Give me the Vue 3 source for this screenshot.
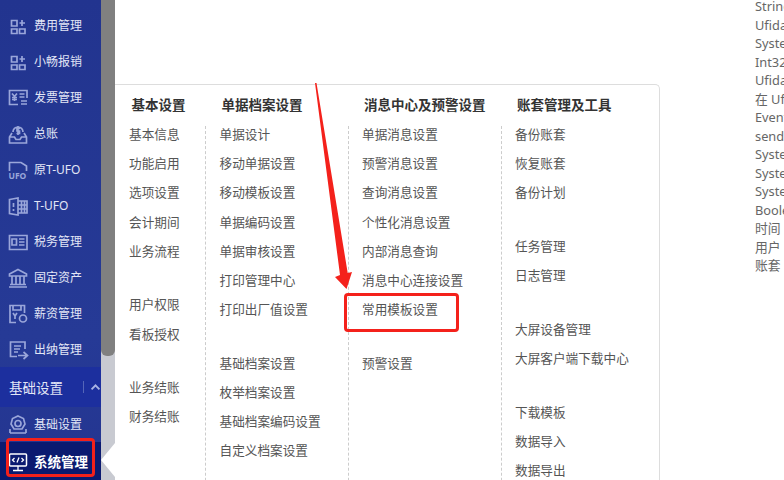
<template>
  <div class="page">
    <!-- 左侧菜单 -->
    <aside class="side">
      <div v-for="item in menuTop" :key="item.name" class="side-item">
        <svg class="icon" width="22" height="22" viewBox="0 0 22 22">
          <path :d="item.d" fill="none" stroke="currentColor" stroke-width="1.7" />
          <text v-if="item.tag" x="1.5" y="21" class="icon-tag">{{ item.tag }}</text>
        </svg>
        <span>{{ item.name }}</span>
      </div>
      <div class="side-head">
        <span>基础设置</span>
        <i class="head-line"></i>
        <svg width="14" height="10" viewBox="0 0 14 10">
          <path d="M2 8 L7 3 L12 8" fill="none" stroke="#a9b4e4" stroke-width="2.4" />
        </svg>
      </div>
      <div class="side-item">
        <svg class="icon" width="22" height="22" viewBox="0 0 22 22">
          <path d="M11 3 L16.5 5.5 L18 11 L15 16 L7 16 L4 11 L5.5 5.5 Z M11 7.5 A3 3 0 1 0 11 13.5 A3 3 0 1 0 11 7.5 Z M3 20 L19 20 M3 16 L3 20 M19 16 L19 20" fill="none" stroke="currentColor" stroke-width="1.7" />
        </svg>
        <span>基础设置</span>
      </div>
      <div class="side-item active">
        <svg class="icon" width="22" height="22" viewBox="0 0 22 22">
          <rect x="2.5" y="4" width="17" height="12" rx="1" fill="none" stroke="#fff" stroke-width="1.5" />
          <path d="M11 16 L11 20 M6 20.5 L16 20.5 M7.5 8 L5.5 10 L7.5 12 M14.5 8 L16.5 10 L14.5 12 M12 7.5 L10 12.5" fill="none" stroke="#fff" stroke-width="1.3" />
        </svg>
        <span>系统管理</span>
      </div>
    </aside>

    <!-- 滚动条 -->
    <div class="scroll">
      <div class="thumb"></div>
      <div class="notch"></div>
    </div>

    <!-- 设置面板 -->
    <section class="panel">
      <div v-for="col in columns" :key="col.title" class="col">
        <h3>{{ col.title }}</h3>
        <div class="col-body">
          <ul v-for="(group, i) in col.groups" :key="i" class="group">
            <li v-for="name in group" :key="name">{{ name }}</li>
          </ul>
        </div>
      </div>
    </section>

    <!-- 右侧日志 -->
    <div class="log">
      <p v-for="(line, i) in logLines" :key="i">{{ line }}</p>
    </div>

    <!-- 标注 -->
    <svg class="arrow" width="60" height="220" viewBox="0 0 60 220">
      <polygon points="5,3 6.5,3 37.7,193 42,192 36.5,209 25,197 30,195" fill="#f4211b" />
    </svg>
    <div class="mark mark-template"></div>
    <div class="mark mark-system"></div>
  </div>
</template>

<script setup>
const menuTop = [
  { name: '费用管理', d: 'M4.5 6.5h5.5v5.5h-5.5z M4.5 15h5.5v4.5h-5.5z M12.5 15h5.5v4.5h-5.5z M15 6v6 M12.5 9h5.5' },
  { name: '小畅报销', d: 'M4.5 6.5h5.5v5.5h-5.5z M4.5 15h5.5v4.5h-5.5z M12.5 15h5.5v4.5h-5.5z M15 6v6 M12.5 9h5.5' },
  { name: '发票管理', d: 'M11 18.5H2.5V4.5H20V12 M5 7.5l2.5 3 2.5-3 M7.5 10.5V15 M5 11.5h5 M5 13.5h5 M12.5 8h5 M12.5 11h5 M14 15h6 M20 18h-6' },
  { name: '总账', d: 'M5 11 L2.5 15 V21 H19.5 V15 L17 11 M2.5 15 H7.5 L9 17.5 H13 L14.5 15 H19.5 M6 10 A5 5 0 1 1 16 10 M13 6.5 H10 V9 H12.5 V11.5 H9.5 M11 4 V13' },
  { name: '原T-UFO', tag: 'UFO', d: 'M2.5 13 V4.5 H14 L19.5 8 V13' },
  { name: 'T-UFO', d: 'M2.5 5.5 L11 4 V21 L2.5 19.5 Z M11 7 H20 V19 H11 M14.5 7 V19 M17.5 7 V19 M11 11 H20 M11 15 H20 M6.5 9 V13 M6.5 15 V17' },
  { name: '税务管理', d: 'M2.5 5.5 H20 V19.5 H2.5 Z M5 9 H9.5 V15 H5 Z M12 9 H17.5 M12 12 H17.5 M12 15 H17.5' },
  { name: '固定资产', d: 'M11 3.5 L19.5 8 V10 H2.5 V8 Z M5 10 V18 M9 10 V18 M13 10 V18 M17 10 V18 M3 18.5 H19 M2 21 H20' },
  { name: '薪资管理', d: 'M9 20.5 H3 V3.5 H17.5 V11 M6 3.5 V8 H14 V3.5 M6 11 L8 14 L10 11 M8 14 V17 M16 13 A3.5 3.5 0 1 0 16 20 A3.5 3.5 0 1 0 16 13 Z' },
  { name: '出纳管理', d: 'M10 18.5 H3.5 V4 H18 V11 M7 8 H14 M7 11 H13 M7 14 H11 M11 17.5 H20 M16.5 14 L20.5 17.5 L16.5 21' }
]

const columns = [
  {
    title: '基本设置',
    groups: [
      ['基本信息', '功能启用', '选项设置', '会计期间', '业务流程'],
      ['用户权限', '看板授权'],
      ['业务结账', '财务结账']
    ]
  },
  {
    title: '单据档案设置',
    groups: [
      ['单据设计', '移动单据设置', '移动模板设置', '单据编码设置', '单据审核设置', '打印管理中心', '打印出厂值设置'],
      ['基础档案设置', '枚举档案设置', '基础档案编码设置', '自定义档案设置']
    ]
  },
  {
    title: '消息中心及预警设置',
    groups: [
      ['单据消息设置', '预警消息设置', '查询消息设置', '个性化消息设置', '内部消息查询', '消息中心连接设置', '常用模板设置'],
      ['预警设置']
    ]
  },
  {
    title: '账套管理及工具',
    groups: [
      ['备份账套', '恢复账套', '备份计划'],
      ['任务管理', '日志管理'],
      ['大屏设备管理', '大屏客户端下载中心'],
      ['下载模板', '数据导入', '数据导出']
    ]
  }
]

const logLines = [
  'String', 'Ufida.U8', 'System', 'Int32', 'Ufida.U8', '在 Ufida', 'EventArgs', 'sender', 'System', 'System',
  'System', 'Boolean', '时间', '用户', '账套'
]
</script>

<style>
html, body {
  margin: 0;
  background: #fff;
}
</style>

<style scoped>
.page {
  position: relative;
  display: flex;
  width: 784px;
  height: 480px;
  overflow: hidden;
  background: #fff;
  font-family: "Noto Sans", "Noto Sans CJK SC", sans-serif;
}

.side {
  flex: none;
  width: 101px;
  height: 480px;
  padding-top: 7px;
  box-sizing: border-box;
  background: linear-gradient(#22348f, #263a96 70%, #243590);
  color: #e2e6f6;
  font-size: 12px;
}

.side-item {
  display: flex;
  align-items: center;
  gap: 5px;
  height: 36px;
  padding-left: 7px;
  color: #e2e6f6;
}

.icon {
  flex: none;
  color: #9aa6da;
}

.icon-tag {
  font-size: 8.5px;
  font-weight: 700;
  fill: currentColor;
}

.side-head {
  display: flex;
  align-items: center;
  height: 40px;
  margin-bottom: -1px;
  padding-left: 9px;
  background: #1c2f9e;
  font-size: 13.5px;
  white-space: nowrap;
}

.head-line {
  flex: none;
  width: 1px;
  height: 12px;
  margin: 0 6px 0 20px;
  background: #5566b8;
}

.side-item.active {
  height: 38px;
  background: #0b1a70;
  color: #fff;
  font-size: 13.5px;
  font-weight: 700;
}

.scroll {
  position: relative;
  flex: none;
  width: 14px;
  background: #c8cad1;
}

.thumb {
  height: 356px;
  background: #808080;
  border-radius: 0 0 6px 6px;
}

.notch {
  position: absolute;
  left: 0;
  top: 443px;
  border-top: 17px solid transparent;
  border-bottom: 17px solid transparent;
  border-right: 14px solid #fff;
}

.panel {
  flex: none;
  display: grid;
  grid-template-columns: 90px 142.5px 153px 1fr;
  box-sizing: border-box;
  width: 545px;
  height: 440px;
  margin-top: 84px;
  border-top: 1px solid #ddd;
  border-right: 1px solid #ddd;
  border-top-right-radius: 5px;
}

.col h3 {
  height: 41px;
  margin: 0;
  padding-left: 16.5px;
  font-size: 13.5px;
  font-weight: 700;
  line-height: 40px;
  color: #333;
  white-space: nowrap;
}

.col-body {
  display: flex;
  flex-direction: column;
  gap: 35.6px;
  height: 400px;
  padding-left: 13.5px;
  border-left: 1px dashed #ccc;
}

.col:first-child .col-body {
  padding-left: 13px;
  border-left: 1px solid transparent;
}

.group {
  margin: 0;
  padding: 0;
  list-style: none;
}

.group li {
  height: 18px;
  margin-bottom: 11.2px;
  font-size: 12.65px;
  line-height: 17.2px;
  color: #555;
  white-space: nowrap;
}

.group li:last-child {
  margin-bottom: 0;
}

.log {
  flex: none;
  margin: -3px 0 0 95px;
  font-size: 12.8px;
  color: #666;
}

.log p {
  height: 18.5px;
  margin: 0;
  line-height: 18.5px;
  white-space: nowrap;
}

.arrow {
  position: absolute;
  left: 310px;
  top: 80px;
}

.mark {
  position: absolute;
  box-sizing: border-box;
  border: 3px solid #f4211b;
  border-radius: 4px;
}

.mark-template {
  left: 344px;
  top: 293px;
  width: 115px;
  height: 39px;
}

.mark-system {
  left: 6px;
  top: 438px;
  width: 89px;
  height: 39px;
}
</style>
